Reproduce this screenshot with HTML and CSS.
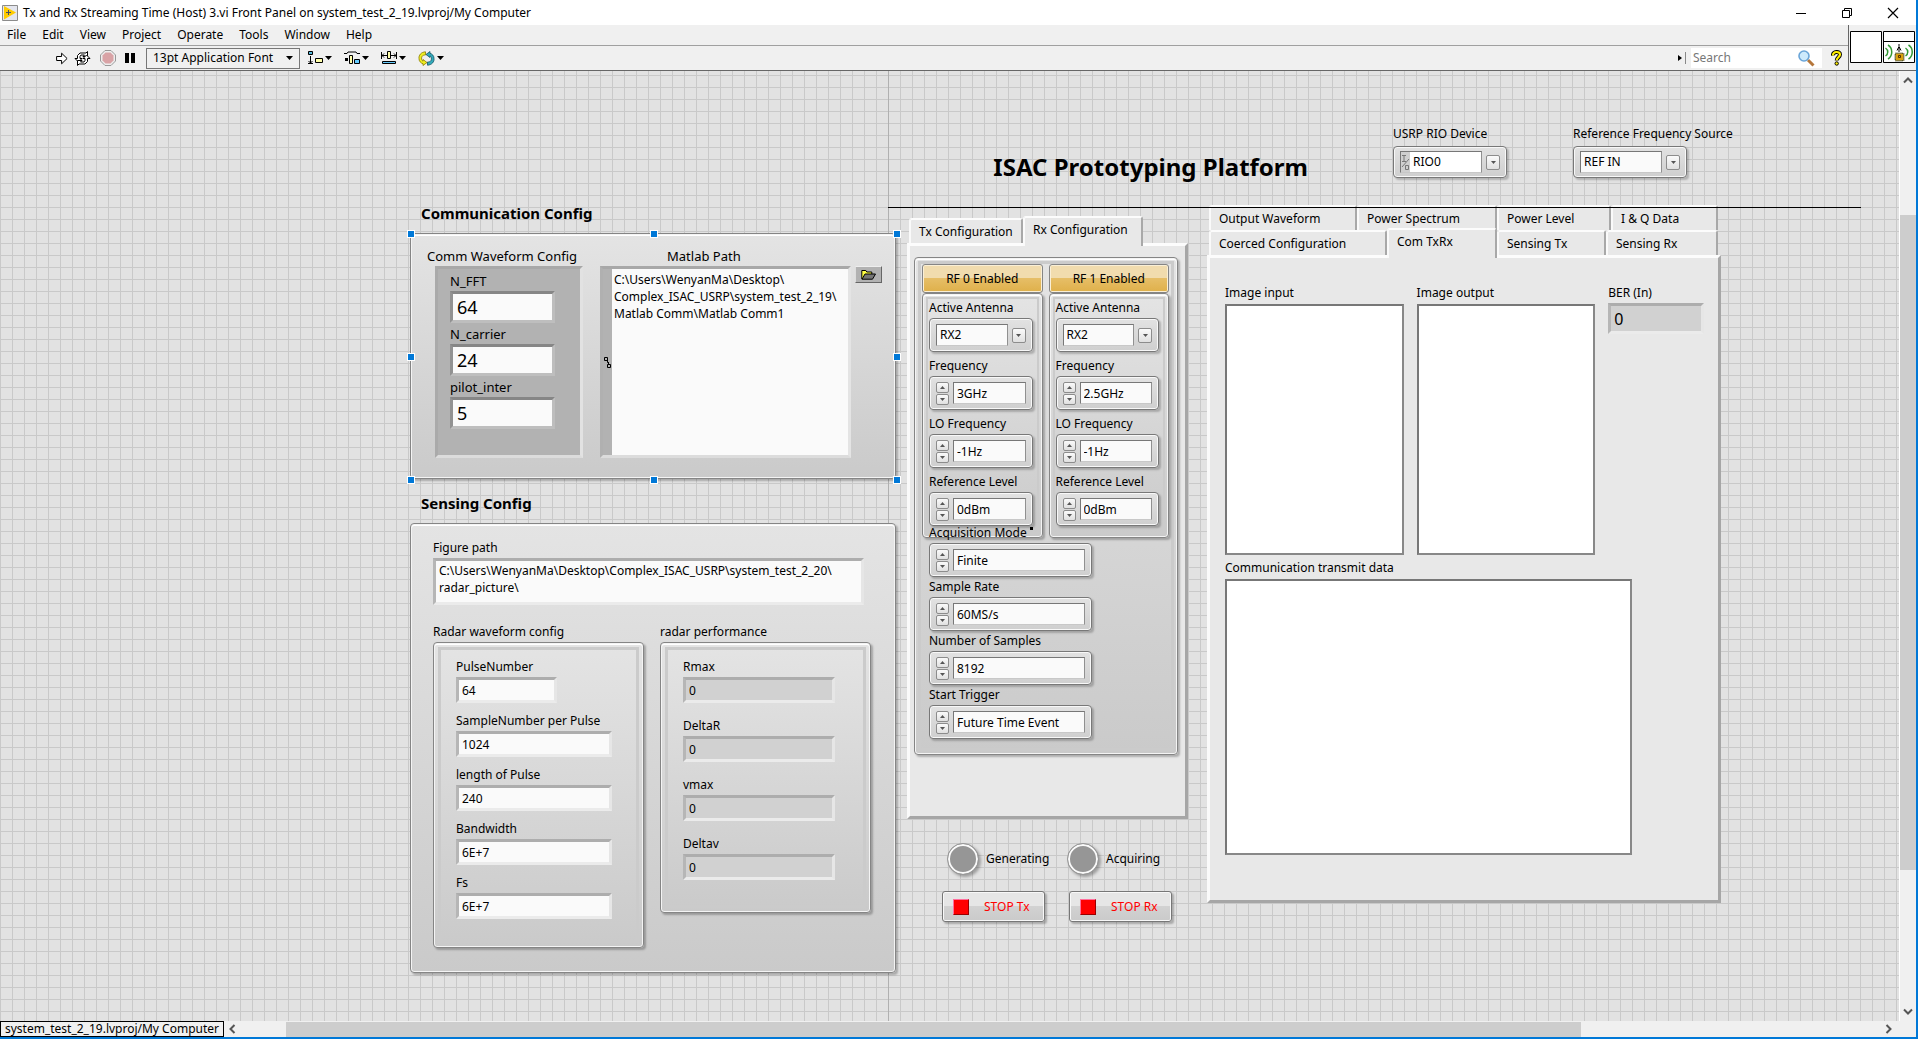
FILE: index.html
```html
<!DOCTYPE html>
<html lang="en">
<head>
<meta charset="utf-8">
<title>Tx and Rx Streaming Time (Host) 3.vi Front Panel</title>
<link rel="stylesheet" href="styles.css">
</head>
<body>
<svg width="0" height="0" class="defs" aria-hidden="true">
  <symbol id="down" viewBox="0 0 7 4"><path d="M0 0h7L3.5 4z"/></symbol>
  <symbol id="up" viewBox="0 0 7 4"><path d="M0 4h7L3.5 0z"/></symbol>
</svg>
<div class="window">
  <header class="titlebar">
    <svg width="16" height="16" viewBox="0 0 16 16"><path d="M.5.5h15v15H.5z" fill="#e4e6ee" stroke="#8c8c8c"/><path d="M2 1l12 6.500-12 7z" fill="#fc0"/><path d="M4 7.500h5M6.500 5v5" stroke="#44506a"/></svg>
    <span class="titlebar-text">Tx and Rx Streaming Time (Host) 3.vi Front Panel on system_test_2_19.lvproj/My Computer</span>
    <div class="window-buttons">
      <button aria-label="Minimize"><svg width="12" height="12" viewBox="0 0 12 12"><path d="M1 6.500h10" stroke="#000"/></svg></button>
      <button aria-label="Restore"><svg width="12" height="12" viewBox="0 0 12 12"><path d="M1.500 3.500h7v7h-7zM3.500 3V1.500h7v7H9" stroke="#000" fill="none"/></svg></button>
      <button aria-label="Close"><svg width="12" height="12" viewBox="0 0 12 12"><path d="M1 1l10 10M11 1L1 11" stroke="#000" stroke-width="1.200"/></svg></button>
    </div>
  </header>

  <div class="bars">
    <div class="bars-main">
      <nav class="menubar">
        <button>File</button><button>Edit</button><button>View</button><button>Project</button><button>Operate</button><button>Tools</button><button>Window</button><button>Help</button>
      </nav>
      <div class="toolbar">
        <button aria-label="Run"><svg width="12" height="13" viewBox="0 0 12 13"><path d="M.6 4.500h5V1.200l5.500 5.300-5.500 5.300V8.500h-5z" fill="#fff" stroke="#000"/></svg></button>
        <button aria-label="Run continuously" class="gap-run"><svg width="17" height="15" viewBox="0 0 17 15" fill="#fff" stroke="#000"><path d="M1 7.500h2.500v-3L6 2h6l1.500-1.500v5H9L10.500 4H7L6 5.500v2h2L4.500 11z"/><path d="M16 7.500h-2.500v3L11 13H5l-1.500 1.500v-5H8L6.500 11H10l1-1.500v-2H9L12.500 4z"/></svg></button>
        <button aria-label="Abort" class="gap-wide"><svg width="16" height="16" viewBox="0 0 16 16"><path d="M5 .5h6L15.500 5v6L11 15.500H5L.5 11V5z" fill="#eee" stroke="#999"/><path d="M5.500 2.500h5l3 3v5l-3 3h-5l-3-3v-5z" fill="#d9a3a6"/></svg></button>
        <button aria-label="Pause" class="gap-wide"><svg width="10" height="12" viewBox="0 0 10 12"><path d="M0 1h4v10H0zM6 1h4v10H6z"/></svg></button>
        <select class="font-ring" aria-label="Text settings"><option>13pt Application Font</option></select>
        <svg class="caret-over" width="7" height="4"><use href="#down"/></svg>
        <button class="tool" aria-label="Align objects"><svg width="15" height="14" viewBox="0 0 15 14"><path d="M.5.5h4v3h-4z" fill="#5bd" stroke="#000"/><path d="M7.500 7.500h7v4h-7z" fill="#ffa" stroke="#000"/><path d="M2.500 5v7M.5 10l2 2 2-2M0 12.500h5" fill="none" stroke="#000"/></svg><svg width="7" height="4"><use href="#down"/></svg></button>
        <button class="tool" aria-label="Distribute objects"><svg width="16" height="14" viewBox="0 0 16 14"><path d="M0 2.500h3l1-1.500h8l1 1.500h3" fill="none" stroke="#000"/><path d="M1 7h3v3H1z"/><path d="M5.500 4.500h3v8h-3z" fill="#ffa" stroke="#000"/><path d="M10.500 8.500h5v4h-5z" fill="#6cf" stroke="#000"/></svg><svg width="7" height="4"><use href="#down"/></svg></button>
        <button class="tool" aria-label="Resize objects"><svg width="16" height="14" viewBox="0 0 16 14"><path d="M.5 1v7M15.500 1v7M1 4.500h5M10 4.500h5M3 2.500l-2 2 2 2M13 2.500l2 2-2 2" fill="none" stroke="#000"/><path d="M6.500.5h3v7h-3z" fill="#ffa" stroke="#000"/><path d="M1.500 10.500h13v2h-13z" fill="#6cf" stroke="#000"/></svg><svg width="7" height="4"><use href="#down"/></svg></button>
        <button class="tool" aria-label="Reorder"><svg width="17" height="15" viewBox="0 0 17 15"><path d="M7.500.8C3 1 .5 4.500 1 7.500.8 10 3 12.300 5 12.700V14.500L9 11.500 5 8.500v1.700C3.500 9.500 3.200 7 4 5.500 4.700 4.300 6 4 7.500 4z" fill="#ee2" stroke="#870" stroke-width=".8"/><path d="M9.500 14.200c4.500-.2 7-3.700 6.500-6.700.2-2.500-2-4.800-4-5.200V.5L8 3.500l4 3V4.800c1.500.7 1.800 3.200 1 4.700-.7 1.200-2 1.500-3.500 1.500z" fill="#3ab" stroke="#156" stroke-width=".8"/></svg><svg width="7" height="4"><use href="#down"/></svg></button>
        <svg class="search-grip" width="8" height="12" viewBox="0 0 8 12"><path d="M0 3l4 3-4 3z"/><path d="M7.500 0v12" stroke="#888"/></svg>
        <div class="search"><input type="search" aria-label="Search" placeholder="Search"><svg width="17" height="17" viewBox="0 0 17 17"><path d="M10 10l5.500 5.500" stroke="#b5763a" stroke-width="3"/><circle cx="6" cy="6" r="5" fill="#cdeafc" stroke="#6aa5d8" stroke-width="1.600"/></svg></div>
        <button class="help" aria-label="Context help"><svg width="11" height="16" viewBox="0 0 11 16"><path d="M2 5.500C1.500 1 9 1 9 4.500 9 7 5.700 7.500 5.700 10.500" fill="none" stroke="#000" stroke-width="4"/><path d="M2 5.500C1.500 1 9 1 9 4.500 9 7 5.700 7.500 5.700 10.300" fill="none" stroke="#fe0" stroke-width="2.200"/><circle cx="5.700" cy="13.500" r="1.700" fill="#fe0" stroke="#000"/></svg></button>
      </div>
    </div>
    <div class="vi-icons">
      <svg width="32" height="32" viewBox="0 0 32 32"><path d="M.5.5h31v31H.5z" fill="#fff" stroke="#000"/></svg>
      <svg width="32" height="32" viewBox="0 0 32 32"><path d="M.5.5h31v31H.5zM0 10.500h32" fill="#fff" stroke="#000"/><path d="M2.500 17c3 2 3 6 0 8M5 14c5 3 5 11 0 14M22.500 17c3 2 3 6 0 8M25.500 14c5 3 5 11 0 14" fill="none" stroke="#393" stroke-width="1.500"/><path d="M16 21v-5M14 19.500l2-4 2 4M16 13v2" stroke="#000" fill="none"/><path d="M12.500 22.500h8v7h-8z" fill="#c90" stroke="#330" stroke-width="2" stroke-dasharray="1 1"/><path d="M13 23h7v6h-7z" fill="#d9a010"/><path d="M15.500 24.500h2v2h-2z" fill="none" stroke="#530"/></svg>
    </div>
  </div>

  <div class="work">
    <main class="canvas">
      <div class="origin-line"></div>
      <div class="top-row">
        <h1>ISAC Prototyping Platform</h1>
        <div class="device">
          <label for="rio">USRP RIO Device</label>
          <div class="frame tall"><div class="io-field"><svg width="9" height="18" viewBox="0 0 9 18" fill="none" stroke="#777"><path d="M1 2.500h4M3 3v5M1 8.500h4M8 6L1 14M4.500 12.500h3v4h-3z"/></svg><select id="rio"><option>RIO0</option></select></div><span class="drop"><svg width="5" height="3"><use href="#down"/></svg></span></div>
        </div>
        <div class="device">
          <label for="ref">Reference Frequency Source</label>
          <div class="frame tall"><select id="ref"><option>REF IN</option></select><span class="drop"><svg width="5" height="3"><use href="#down"/></svg></span></div>
        </div>
      </div>

      <div class="columns">
        <section class="config">
          <h2>Communication Config</h2>
          <div class="panel comm">
            <div class="comm-group">
              <h3>Comm Waveform Config</h3>
              <div class="cluster">
                <label for="nfft">N_FFT</label><input id="nfft" value="64">
                <label for="ncar">N_carrier</label><input id="ncar" value="24">
                <label for="pilot">pilot_inter</label><input id="pilot" value="5">
              </div>
            </div>
            <div class="path-group">
              <label class="path-label" for="mpath">Matlab Path</label>
              <div class="path-box">
                <svg width="9" height="11" viewBox="0 0 9 11" fill="none" stroke="#000"><path d="M1.500.5h3v3h-3zM4 2.500h.5v3h1M4.500 7.500h3v3h-3zM5.500 5v2"/></svg>
                <textarea id="mpath" spellcheck="false">C:\Users\WenyanMa\Desktop\
Complex_ISAC_USRP\system_test_2_19\
Matlab Comm\Matlab Comm1</textarea>
              </div>
            </div>
            <button class="browse" aria-label="Browse"><svg width="15" height="11" viewBox="0 0 15 11"><path d="M.8 10V1.500h4l1 1.500h5v2" fill="#ff4" stroke="#000"/><path d="M1 10.200L4 5h10.500l-3 5.200z" fill="#777" stroke="#000"/></svg></button>
            <div class="handles"><i></i><i></i><i></i><i></i><b></b><i></i><i></i><i></i><i></i></div>
          </div>

          <h2>Sensing Config</h2>
          <div class="panel sensing">
            <label for="fpath">Figure path</label>
            <textarea id="fpath" class="sunken figure-path" spellcheck="false">C:\Users\WenyanMa\Desktop\Complex_ISAC_USRP\system_test_2_20\
radar_picture\</textarea>
            <div class="radar">
              <div>
                <h4>Radar waveform config</h4>
                <div class="panel sub"><div class="ring waveform">
                  <div class="field"><label for="pn">PulseNumber</label><input id="pn" class="sunken short" value="64"></div>
                  <div class="field"><label for="sn">SampleNumber per Pulse</label><input id="sn" class="sunken" value="1024"></div>
                  <div class="field"><label for="lp">length of Pulse</label><input id="lp" class="sunken" value="240"></div>
                  <div class="field"><label for="bw">Bandwidth</label><input id="bw" class="sunken" value="6E+7"></div>
                  <div class="field"><label for="fs">Fs</label><input id="fs" class="sunken" value="6E+7"></div>
                </div></div>
              </div>
              <div>
                <h4>radar performance</h4>
                <div class="panel sub"><div class="ring performance">
                  <div class="field"><label for="rm">Rmax</label><input id="rm" class="sunken readout" value="0" readonly></div>
                  <div class="field"><label for="dr">DeltaR</label><input id="dr" class="sunken readout" value="0" readonly></div>
                  <div class="field"><label for="vm">vmax</label><input id="vm" class="sunken readout" value="0" readonly></div>
                  <div class="field"><label for="dv">Deltav</label><input id="dv" class="sunken readout" value="0" readonly></div>
                </div></div>
              </div>
            </div>
          </div>
        </section>

        <section class="radio">
          <div class="tabs radio-tabs" role="tablist"><button role="tab" class="tab">Tx Configuration</button><button role="tab" class="tab selected" aria-selected="true">Rx Configuration</button></div>
          <div class="page radio-page">
            <div class="panel rx"><div class="ring">
              <div class="channels">
                <div>
                  <button class="enable">RF 0 Enabled</button>
                  <div class="panel channel"><div class="ring">
                    <label for="a0">Active Antenna</label>
                    <div class="frame"><select id="a0"><option>RX2</option></select><span class="drop"><svg width="5" height="3"><use href="#down"/></svg></span></div>
                    <label for="f0">Frequency</label>
                    <div class="frame"><span class="spin"><button aria-label="Increase"><svg width="5" height="3"><use href="#up"/></svg></button><button aria-label="Decrease"><svg width="5" height="3"><use href="#down"/></svg></button></span><input id="f0" value="3GHz"></div>
                    <label for="l0">LO Frequency</label>
                    <div class="frame"><span class="spin"><button aria-label="Increase"><svg width="5" height="3"><use href="#up"/></svg></button><button aria-label="Decrease"><svg width="5" height="3"><use href="#down"/></svg></button></span><input id="l0" value="-1Hz"></div>
                    <label for="r0">Reference Level</label>
                    <div class="frame"><span class="spin"><button aria-label="Increase"><svg width="5" height="3"><use href="#up"/></svg></button><button aria-label="Decrease"><svg width="5" height="3"><use href="#down"/></svg></button></span><input id="r0" value="0dBm"></div>
                  </div></div>
                </div>
                <div>
                  <button class="enable">RF 1 Enabled</button>
                  <div class="panel channel"><div class="ring">
                    <label for="a1">Active Antenna</label>
                    <div class="frame"><select id="a1"><option>RX2</option></select><span class="drop"><svg width="5" height="3"><use href="#down"/></svg></span></div>
                    <label for="f1">Frequency</label>
                    <div class="frame"><span class="spin"><button aria-label="Increase"><svg width="5" height="3"><use href="#up"/></svg></button><button aria-label="Decrease"><svg width="5" height="3"><use href="#down"/></svg></button></span><input id="f1" value="2.5GHz"></div>
                    <label for="l1">LO Frequency</label>
                    <div class="frame"><span class="spin"><button aria-label="Increase"><svg width="5" height="3"><use href="#up"/></svg></button><button aria-label="Decrease"><svg width="5" height="3"><use href="#down"/></svg></button></span><input id="l1" value="-1Hz"></div>
                    <label for="r1">Reference Level</label>
                    <div class="frame"><span class="spin"><button aria-label="Increase"><svg width="5" height="3"><use href="#up"/></svg></button><button aria-label="Decrease"><svg width="5" height="3"><use href="#down"/></svg></button></span><input id="r1" value="0dBm"></div>
                  </div></div>
                </div>
              </div>
              <div class="acquisition">
                <label for="am" class="marked">Acquisition Mode</label>
                <div class="frame"><span class="spin"><button aria-label="Previous"><svg width="5" height="3"><use href="#up"/></svg></button><button aria-label="Next"><svg width="5" height="3"><use href="#down"/></svg></button></span><input id="am" value="Finite"></div>
                <label for="sr">Sample Rate</label>
                <div class="frame"><span class="spin"><button aria-label="Increase"><svg width="5" height="3"><use href="#up"/></svg></button><button aria-label="Decrease"><svg width="5" height="3"><use href="#down"/></svg></button></span><input id="sr" value="60MS/s"></div>
                <label for="ns">Number of Samples</label>
                <div class="frame"><span class="spin"><button aria-label="Increase"><svg width="5" height="3"><use href="#up"/></svg></button><button aria-label="Decrease"><svg width="5" height="3"><use href="#down"/></svg></button></span><input id="ns" value="8192"></div>
                <label for="st">Start Trigger</label>
                <div class="frame"><span class="spin"><button aria-label="Previous"><svg width="5" height="3"><use href="#up"/></svg></button><button aria-label="Next"><svg width="5" height="3"><use href="#down"/></svg></button></span><input id="st" value="Future Time Event"></div>
              </div>
            </div></div>
          </div>
          <div class="leds">
            <span class="led"><i></i>Generating</span>
            <span class="led"><i></i>Acquiring</span>
          </div>
          <div class="stops">
            <button class="stop"><i></i><span>STOP Tx</span></button>
            <button class="stop"><i></i><span>STOP Rx</span></button>
          </div>
        </section>

        <section class="results">
          <div role="tablist">
            <div class="tabs row-back"><button role="tab" class="tab">Output Waveform</button><button role="tab" class="tab">Power Spectrum</button><button role="tab" class="tab">Power Level</button><button role="tab" class="tab">I &amp; Q Data</button></div>
            <div class="tabs row-front"><button role="tab" class="tab">Coerced Configuration</button><button role="tab" class="tab selected" aria-selected="true">Com TxRx</button><button role="tab" class="tab">Sensing Tx</button><button role="tab" class="tab">Sensing Rx</button></div>
          </div>
          <div class="page results-page">
            <div class="images">
              <div><h4>Image input</h4><div class="picture"></div></div>
              <div><h4>Image output</h4><div class="picture"></div></div>
              <div><label for="ber">BER (In)</label><input id="ber" class="sunken readout ber" value="0" readonly></div>
            </div>
            <h4>Communication transmit data</h4>
            <div class="picture data"></div>
          </div>
        </section>
      </div>
    </main>
    <div class="vscroll">
      <svg width="10" height="7" viewBox="0 0 10 7"><path d="M1 5.500l4-4 4 4" fill="none" stroke="#555" stroke-width="2"/></svg>
      <div class="vtrack"><div class="vthumb"></div></div>
      <svg width="10" height="7" viewBox="0 0 10 7"><path d="M1 1.500l4 4 4-4" fill="none" stroke="#555" stroke-width="2"/></svg>
    </div>
  </div>

  <footer class="statusbar">
    <button class="project">system_test_2_19.lvproj/My Computer</button>
    <svg width="7" height="10" viewBox="0 0 7 10"><path d="M5.500 1l-4 4 4 4" fill="none" stroke="#555" stroke-width="2"/></svg>
    <div class="htrack"><div class="hthumb"></div></div>
    <svg width="7" height="10" viewBox="0 0 7 10"><path d="M1.500 1l4 4-4 4" fill="none" stroke="#555" stroke-width="2"/></svg>
  </footer>
</div>
</body>
</html>
```
FILE: styles.css
```css
* { box-sizing: border-box; }
body {
  margin: 0;
  font: 12px/18px "Noto Sans", "Open Sans", sans-serif;
  color: #000;
}
button, input, select, textarea {
  font: inherit;
  color: inherit;
  margin: 0;
  padding: 0;
  border: 0;
  border-radius: 0;
  background: none;
  appearance: none;
  outline: 0;
}
textarea { resize: none; overflow: hidden; display: block; white-space: pre; }
h1, h2, h3, h4 { margin: 0; font-weight: 400; font-size: 12px; white-space: nowrap; }
svg { display: block; flex: none; }
label { display: block; white-space: nowrap; }
.defs { position: absolute; }

.window {
  min-height: 100vh;
  display: flex;
  flex-direction: column;
  border-right: 2px solid #0078d7;
  border-bottom: 2px solid #0078d7;
  background: #f0f0f0;
}

/* title bar */
.titlebar {
  height: 25px;
  display: flex;
  align-items: center;
  gap: 5px;
  padding-left: 2px;
  background: #fff;
}
.titlebar-text { flex: 1; font-size: 12px; }
.window-buttons { display: flex; gap: 34px; padding-right: 17px; }

/* menu and tool bars */
.bars { display: flex; height: 46px; border-bottom: 1px solid #666; }
.bars-main { flex: 1; display: flex; flex-direction: column; }
.menubar { display: flex; height: 20px; gap: 16px; padding-left: 7px; line-height: 18px; }
.toolbar {
  flex: 1;
  display: flex;
  align-items: center;
  border-top: 1px solid #a0a0a0;
  padding: 0 6px 0 56px;
}
.gap-run { margin-left: 6px; }
.gap-wide { margin-left: 9px; }
.font-ring {
  width: 154px;
  height: 21px;
  margin-left: 11px;
  padding-left: 6px;
  border: 1px solid #777;
}
.caret-over { margin: 0 15px 0 -14px; }
.tool { display: flex; align-items: center; gap: 2px; margin-right: 12px; }
.search-grip { margin-left: auto; }
.search { width: 131px; height: 20px; margin: 0 9px 0 5px; padding: 0 7px 0 2px; background: #fff; display: flex; align-items: center; }
.search input { flex: 1; min-width: 0; }
.search input::placeholder { color: #777; }
.vi-icons { display: flex; gap: 1px; padding: 6px 1px 0; border-left: 1px solid #666; }

/* panel canvas */
.work { flex: 1; display: flex; }
.canvas {
  flex: 1;
  min-width: 0;
  position: relative;
  padding: 0 178px 24px 410px;
  background:
    linear-gradient(90deg, #b0b0b0 1px, transparent 1px) 888px 0 no-repeat,
    linear-gradient(90deg, #c9c9c9 1px, transparent 1px) 0 0 / 12px 12px,
    linear-gradient(#c9c9c9 1px, transparent 1px) 0 4px / 12px 12px,
    #e2e2e2;
}
.origin-line {
  position: absolute;
  z-index: 3;
  left: 888px;
  right: 38px;
  top: 136px;
  height: 1px;
  background: #000;
}
.top-row { height: 131px; padding-top: 54px; display: flex; justify-content: flex-end; }
.top-row h1 { margin: 26px 85px 0 0; font-size: 24px; line-height: 32px; font-weight: 700; }
.device { width: 114px; margin-right: 66px; }
.device:last-child { margin-right: 34px; }
.device label { margin-bottom: 3px; }
.columns {
  display: grid;
  grid-template-columns: minmax(0, 486fr) minmax(0, 292fr) minmax(0, 533fr);
  align-items: start;
}
.radio { margin: 14px 0 0 11px; }
.results { margin: 3px 0 0 19px; }
.config h2 { padding-left: 11px; margin-bottom: 8px; font-size: 15px; line-height: 23px; font-weight: 700; }
.panel + h2 { margin-top: 13px; }

.panel {
  border: 1px solid #858585;
  border-radius: 4px;
  background: linear-gradient(#e4e4e4, #cacaca);
  box-shadow: inset 0 0 0 1px #f4f4f4, inset 0 1px 0 1px #fff, 2px 2px 2px rgba(0, 0, 0, .25);
}
.ring { border: 3px solid #cbcbcb; }

/* sunken fields */
.sunken {
  border: 3px solid;
  border-color: #adadad #e6e6e6 #ebebeb #b6b6b6;
  background: #fafafa;
}
input.sunken { display: block; width: 100%; height: 26px; padding-left: 3px; }
input.readout { background: #d1d1d1; }

/* communication */
.comm { position: relative; height: 246px; display: flex; padding: 12px 13px 0 16px; }
.comm h3, .path-label { font-size: 13px; line-height: 20px; }
.cluster {
  width: 148px;
  height: 192px;
  margin-left: 8px;
  padding: 2px 25px 0 12px;
  border: 3px solid;
  border-color: #a8a8a8 #e2e2e2 #dcdcdc #aaa;
  background: #b2b2b2;
}
.cluster label { font-size: 13px; line-height: 20px; }
.cluster input {
  display: block;
  width: 105px;
  height: 32px;
  margin-bottom: 1px;
  padding-left: 4px;
  font-size: 18px;
  border: 3px solid;
  border-color: #868686 #bdbdbd #bebebe #929292;
  background: #fafafa;
}
.path-group { flex: 1; min-width: 0; margin-left: 17px; }
.path-label { padding-left: 67px; }
.path-box {
  height: 192px;
  display: flex;
  align-items: center;
  border: 3px solid;
  border-color: #a8a8a8 #e4e4e4 #dcdcdc #b0b0b0;
  background: #b2b2b2;
}
.path-box textarea {
  flex: 1;
  min-width: 0;
  height: 100%;
  padding: 2px;
  line-height: 17px;
  background: #fafafa;
}
.browse {
  width: 27px;
  height: 17px;
  margin: 20px 0 0 4px;
  display: grid;
  place-items: center;
  border: 1px solid;
  border-color: #eee #666 #666 #ddd;
  background: #b2b2b2;
}
.handles {
  position: absolute;
  inset: -4px -6px -6px -4px;
  display: grid;
  grid-template-columns: repeat(3, 8px);
  grid-template-rows: repeat(3, 8px);
  justify-content: space-between;
  align-content: space-between;
  pointer-events: none;
}
.handles i { border: 1px solid #fff; background: #0078d7; }

/* sensing */
.sensing { padding: 15px 24px 24px 22px; }
.figure-path { width: 431px; max-width: 100%; height: 47px; margin: 1px 0 18px; padding: 1px 3px; line-height: 17px; }
.radar { display: flex; gap: 16px; align-items: flex-start; }
.radar > div { width: 212px; }
.sub { padding: 4px; margin-top: 1px; }
.waveform { padding: 8px 24px 21px 15px; display: grid; gap: 9px; }
.performance { padding: 8px 28px 25px 15px; display: grid; gap: 14px; }
.field label { margin-bottom: 1px; }
.waveform .short { width: 101px; }

/* tab controls */
.tabs { display: grid; grid-template-rows: 100%; align-items: end; padding: 0 3px 0 2px; }
.tab {
  height: 25px;
  padding-left: 8px;
  border: 2px solid;
  border-color: #fcfcfc #a8a8a8 #fafafa #fafafa;
  border-bottom: 0;
  border-radius: 3px 3px 0 0;
  background: #e8e8e8;
  text-align: left;
  white-space: nowrap;
}
.tab.selected { position: relative; z-index: 1; height: 30px; margin-bottom: -3px; padding-bottom: 4px; }
.page {
  border: 3px solid;
  border-color: #fcfcfc #a6a6a6 #a6a6a6 #fafafa;
  background: #e8e8e8;
}
.radio-tabs { height: 27px; grid-template-columns: 114px 120px; }
.radio-page { padding: 11px 7px 61px 4px; }
.rx { padding: 3px; }
.channels { display: grid; grid-template-columns: minmax(0, 1fr) minmax(0, 1fr); gap: 6px; padding: 0 2px 0 1px; }
.enable {
  display: block;
  width: 100%;
  height: 29px;
  border: 1px solid #858585;
  border-radius: 3px;
  background: linear-gradient(#f1dcae 50%, #e6be67 50%, #dfb04a);
  box-shadow: inset 0 0 0 1px #faefd6;
}
.channel { padding: 3px; }
.channel .ring { padding: 0 4px 1px 1px; border-width: 2px; }
.channel label { margin-bottom: 1px; }
.channel .frame { margin-bottom: 5px; }

.frame {
  height: 34px;
  display: flex;
  align-items: center;
  gap: 4px;
  padding: 5px 6px;
  border: 1px solid #787878;
  border-radius: 4px;
  background: linear-gradient(#e2e2e2, #cfcfcf);
  box-shadow: inset 0 0 0 1px #f8f8f8, 2px 2px 2px rgba(0, 0, 0, .22);
}
.frame.tall { height: 32px; }
.frame input, .frame select {
  flex: 1;
  min-width: 0;
  height: 22px;
  padding-left: 3px;
  border: 1px solid;
  border-color: #777 #909090 #c8c8c8 #777;
  background: #fafafa;
}
.io-field { flex: 1; display: flex; align-items: center; height: 22px; background: #cfcfcf; border: 1px solid; border-color: #777 #909090 #c8c8c8 #777; }
.frame .io-field select { height: 20px; border: 0; background: #fff; }
.drop, .spin button {
  display: grid;
  place-items: center;
  border: 1px solid #8c8c8c;
  border-radius: 2px;
  background: linear-gradient(#fafafa, #e0e0e0);
  fill: #555;
}
.drop { width: 14px; height: 15px; }
.spin { display: grid; gap: 1px; }
.spin button { width: 13px; height: 11px; }

.acquisition { position: relative; width: 164px; margin-top: -14px; padding-bottom: 8px; padding-left: 1px; margin-left: 7px; }
.acquisition label { margin-bottom: 1px; }
.acquisition .frame { margin-bottom: 1px; }
.marked::after { content: ""; display: inline-block; width: 3px; height: 3px; margin-left: 3px; vertical-align: 7px; background: #000; }

.leds { display: flex; padding: 24px 0 0 40px; }
.led { width: 120px; display: flex; align-items: center; gap: 7px; }
.led i { width: 32px; height: 32px; border: 1px solid #999; border-radius: 50%; background: #969696; box-shadow: inset 0 0 0 2px #fafafa, 2px 2px 3px rgba(0, 0, 0, .3); }
.stops { display: flex; gap: 24px; padding: 16px 0 0 35px; }
.stop {
  width: 103px;
  height: 31px;
  display: flex;
  align-items: center;
  gap: 15px;
  padding-left: 10px;
  border: 1px solid #777;
  border-radius: 3px;
  background: linear-gradient(#e6e6e6 50%, #d2d2d2 50%, #cacaca);
  box-shadow: inset 0 0 0 1px #f8f8f8, 2px 2px 2px rgba(0, 0, 0, .25);
  color: #f00;
}
.stop i { width: 16px; height: 16px; border: 1px solid; border-color: #ff6f9c #900 #900 #ff6f9c; background: #f00; }

/* results */
.row-back { grid-template-columns: 148fr 140fr 114fr 107fr; height: 25px; }
.row-front { grid-template-columns: 178fr 110fr 109fr 112fr; height: 25px; }
.results-page { padding: 26px 14px 45px 15px; }
.images { display: grid; grid-template-columns: minmax(0, 179fr) minmax(0, 179fr) minmax(0, 96fr); gap: 13px; margin-bottom: 4px; }
.picture {
  height: 251px;
  margin-top: 2px;
  border: 2px solid;
  border-color: #777 #888 #888 #777;
  background: #fff;
}
.picture.data { width: 85%; height: 276px; }
input.ber { height: 31px; margin-top: 1px; font-size: 16px; }

/* scrollbars */
.vscroll {
  width: 17px;
  display: flex;
  flex-direction: column;
  align-items: center;
  padding: 6px 0 6px;
  border-left: 1px solid #fff;
}
.vtrack { flex: 1; width: 100%; padding: 131px 0 0; }
.vthumb { height: 655px; background: #cdcdcd; }
.statusbar { height: 16px; display: flex; align-items: center; background: #f0f0f0; padding-right: 24px; }
.project { width: 224px; height: 16px; line-height: 14px; border: 1px solid #000; white-space: nowrap; }
.statusbar > svg:nth-of-type(1) { margin-left: 5px; }
.htrack { flex: 1; height: 100%; padding: 1px 0 0 50px; }
.hthumb { width: 81%; height: 15px; background: #cdcdcd; }
```
